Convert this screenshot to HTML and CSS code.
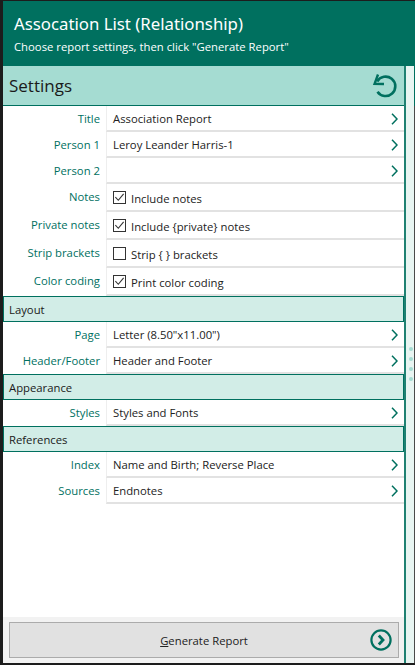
FILE: index.html
```html
<!DOCTYPE html>
<html lang="en">
<head>
    <meta charset="UTF-8">
    <title>Association List (Relationship)</title>
    <link rel="stylesheet" href="styles.css">
</head>
<body>
    <div class="window">
        <div class="header">
            <div class="header-title">Assocation List (Relationship)</div>
            <div class="header-subtitle">Choose report settings, then click "Generate Report"</div>
        </div>

        <div class="content">
            <div class="panel">
                <div class="settings-bar">
                    <span>Settings</span>
                    <svg class="reset-icon" width="26" height="26" viewBox="0 0 26 26">
                        <path d="M7 1.5 L3.6 10.8 L13 11" fill="none" stroke="#00705f" stroke-width="2.4"/>
                        <path d="M6.2 8.5 A9.7 9.7 0 1 1 6.5 18.7" fill="none" stroke="#00705f" stroke-width="2.6"/>
                    </svg>
                </div>

                <div class="rows">
                    <div class="row"><div class="label">Title</div><div class="value">Association Report<svg class="chev" viewBox="0 0 7 12"><path d="M1 .7 L6 6 L1 11.3"/></svg></div></div>
                    <div class="row"><div class="label">Person 1</div><div class="value">Leroy Leander Harris-1<svg class="chev" viewBox="0 0 7 12"><path d="M1 .7 L6 6 L1 11.3"/></svg></div></div>
                    <div class="row"><div class="label">Person 2</div><div class="value"><svg class="chev" viewBox="0 0 7 12"><path d="M1 .7 L6 6 L1 11.3"/></svg></div></div>
                    <div class="row check-row"><div class="label">Notes</div><div class="value"><span class="box"><svg viewBox="0 0 12 12"><path d="M1.5 5.5 L4.7 9 L10.5 2"/></svg></span>Include notes</div></div>
                    <div class="row check-row"><div class="label">Private notes</div><div class="value"><span class="box"><svg viewBox="0 0 12 12"><path d="M1.5 5.5 L4.7 9 L10.5 2"/></svg></span>Include {private} notes</div></div>
                    <div class="row check-row"><div class="label">Strip brackets</div><div class="value"><span class="box"></span>Strip { } brackets</div></div>
                    <div class="row check-row"><div class="label">Color coding</div><div class="value"><span class="box"><svg viewBox="0 0 12 12"><path d="M1.5 5.5 L4.7 9 L10.5 2"/></svg></span>Print color coding</div></div>

                    <div class="section">Layout</div>
                    <div class="row"><div class="label">Page</div><div class="value">Letter (8.50"x11.00")<svg class="chev" viewBox="0 0 7 12"><path d="M1 .7 L6 6 L1 11.3"/></svg></div></div>
                    <div class="row"><div class="label">Header/Footer</div><div class="value">Header and Footer<svg class="chev" viewBox="0 0 7 12"><path d="M1 .7 L6 6 L1 11.3"/></svg></div></div>

                    <div class="section">Appearance</div>
                    <div class="row"><div class="label">Styles</div><div class="value">Styles and Fonts<svg class="chev" viewBox="0 0 7 12"><path d="M1 .7 L6 6 L1 11.3"/></svg></div></div>

                    <div class="section">References</div>
                    <div class="row"><div class="label">Index</div><div class="value">Name and Birth; Reverse Place<svg class="chev" viewBox="0 0 7 12"><path d="M1 .7 L6 6 L1 11.3"/></svg></div></div>
                    <div class="row"><div class="label">Sources</div><div class="value">Endnotes<svg class="chev" viewBox="0 0 7 12"><path d="M1 .7 L6 6 L1 11.3"/></svg></div></div>
                </div>

                <div class="footer">
                    <div class="generate-button">
                        <span><u>G</u>enerate Report</span>
                        <svg class="go-icon" width="22" height="22" viewBox="0 0 22 22">
                            <circle cx="11" cy="11" r="9.6" fill="none" stroke="#00705f" stroke-width="2.2"/>
                            <path d="M8.8 6.5 L13 11 L8.8 15.5" fill="none" stroke="#00705f" stroke-width="2.8"/>
                        </svg>
                    </div>
                </div>
            </div>

            <div class="side-strip">
                <div class="grip"><i></i><i></i><i></i><i></i></div>
            </div>
        </div>
    </div>
</body>
</html>
```

FILE: styles.css
```css
* {
    margin: 0;
    padding: 0;
    box-sizing: border-box;
}

body {
    width: 415px;
    height: 665px;
    overflow: hidden;
    background-color: #1c1c1c;
    font-family: 'Open Sans', 'Noto Sans', sans-serif;
}

.window {
    display: flex;
    flex-direction: column;
    height: 662px;
    margin: 1px 0 0 3px;
    background-color: #ffffff;
    border-bottom-left-radius: 5px;
}

/* Title area */
.header {
    height: 65px;
    flex-shrink: 0;
    padding: 11px 0 0 11px;
    background-color: #00705f;
    color: #ffffff;
}

.header-title {
    font-family: 'Noto Sans', 'Open Sans', sans-serif;
    font-size: 16.8px;
    line-height: 24px;
}

.header-subtitle {
    font-size: 11.3px;
    line-height: 16px;
    margin-top: 3px;
}

.content {
    display: flex;
    flex: 1;
    min-height: 0;
}

.panel {
    width: 401px;
    display: flex;
    flex-direction: column;
}

.settings-bar {
    height: 40px;
    flex-shrink: 0;
    display: flex;
    justify-content: space-between;
    align-items: center;
    padding: 0 7px 0 6px;
    background-color: #a5dcd2;
    border-bottom: 1px solid #00705f;
    font-size: 17px;
    color: #1a1a1a;
}

.rows {
    flex: 1;
}

.row {
    display: flex;
    height: 26px;
}

.check-row {
    height: 28px;
}

.label {
    width: 97px;
    flex-shrink: 0;
    padding-top: 4px;
    text-align: right;
    font-size: 11.3px;
    line-height: 17px;
    color: #00705f;
}

.value {
    flex: 1;
    display: flex;
    align-items: center;
    position: relative;
    margin-left: 6px;
    padding-left: 6px;
    border-left: 1px solid #eeeeee;
    border-bottom: 2px solid #e2e2e2;
    font-size: 11.3px;
    color: #222222;
}

.check-row .value {
    padding-top: 2px;
}

.chev {
    position: absolute;
    right: 6px;
    top: 7px;
    width: 7px;
    height: 12px;
    fill: none;
    stroke: #00705f;
    stroke-width: 1.5;
}

.box {
    width: 13px;
    height: 13px;
    margin: -2px 5px 0 0;
    border: 1px solid #333333;
    background-color: #ffffff;
}

.box svg {
    display: block;
    width: 11px;
    height: 11px;
    fill: none;
    stroke: #333333;
    stroke-width: 1.2;
}

.section {
    height: 26px;
    padding: 1px 0 0 5px;
    background-color: #d2ede7;
    border: 1px solid #00705f;
    font-size: 11.3px;
    line-height: 24px;
    color: #1a1a1a;
}

.footer {
    flex-shrink: 0;
    height: 46px;
    padding: 5px 5px 5px 6px;
    background-color: #f2f2f2;
}

.generate-button {
    height: 36px;
    position: relative;
    display: flex;
    justify-content: center;
    align-items: center;
    background-color: #e1e1e1;
    border: 1px solid #ababab;
    font-size: 11.3px;
    color: #222222;
}

.go-icon {
    position: absolute;
    right: 6px;
    top: 6px;
}

/* Strip to the right of the panel, outer edge is teal beside the header band only */
.side-strip {
    flex: 1;
    padding-top: 281px;
    background: linear-gradient(to bottom, #00705f 40px, #4a4a4a 40px) right / 1px 100% no-repeat, #e8f5f2;
    border-left: 2px solid #1f8172;
}

.grip {
    display: flex;
    flex-direction: column;
    align-items: center;
    gap: 6px;
}

.grip i {
    width: 4px;
    height: 4px;
    border-radius: 50%;
    background-color: #a5dcd2;
}
```
